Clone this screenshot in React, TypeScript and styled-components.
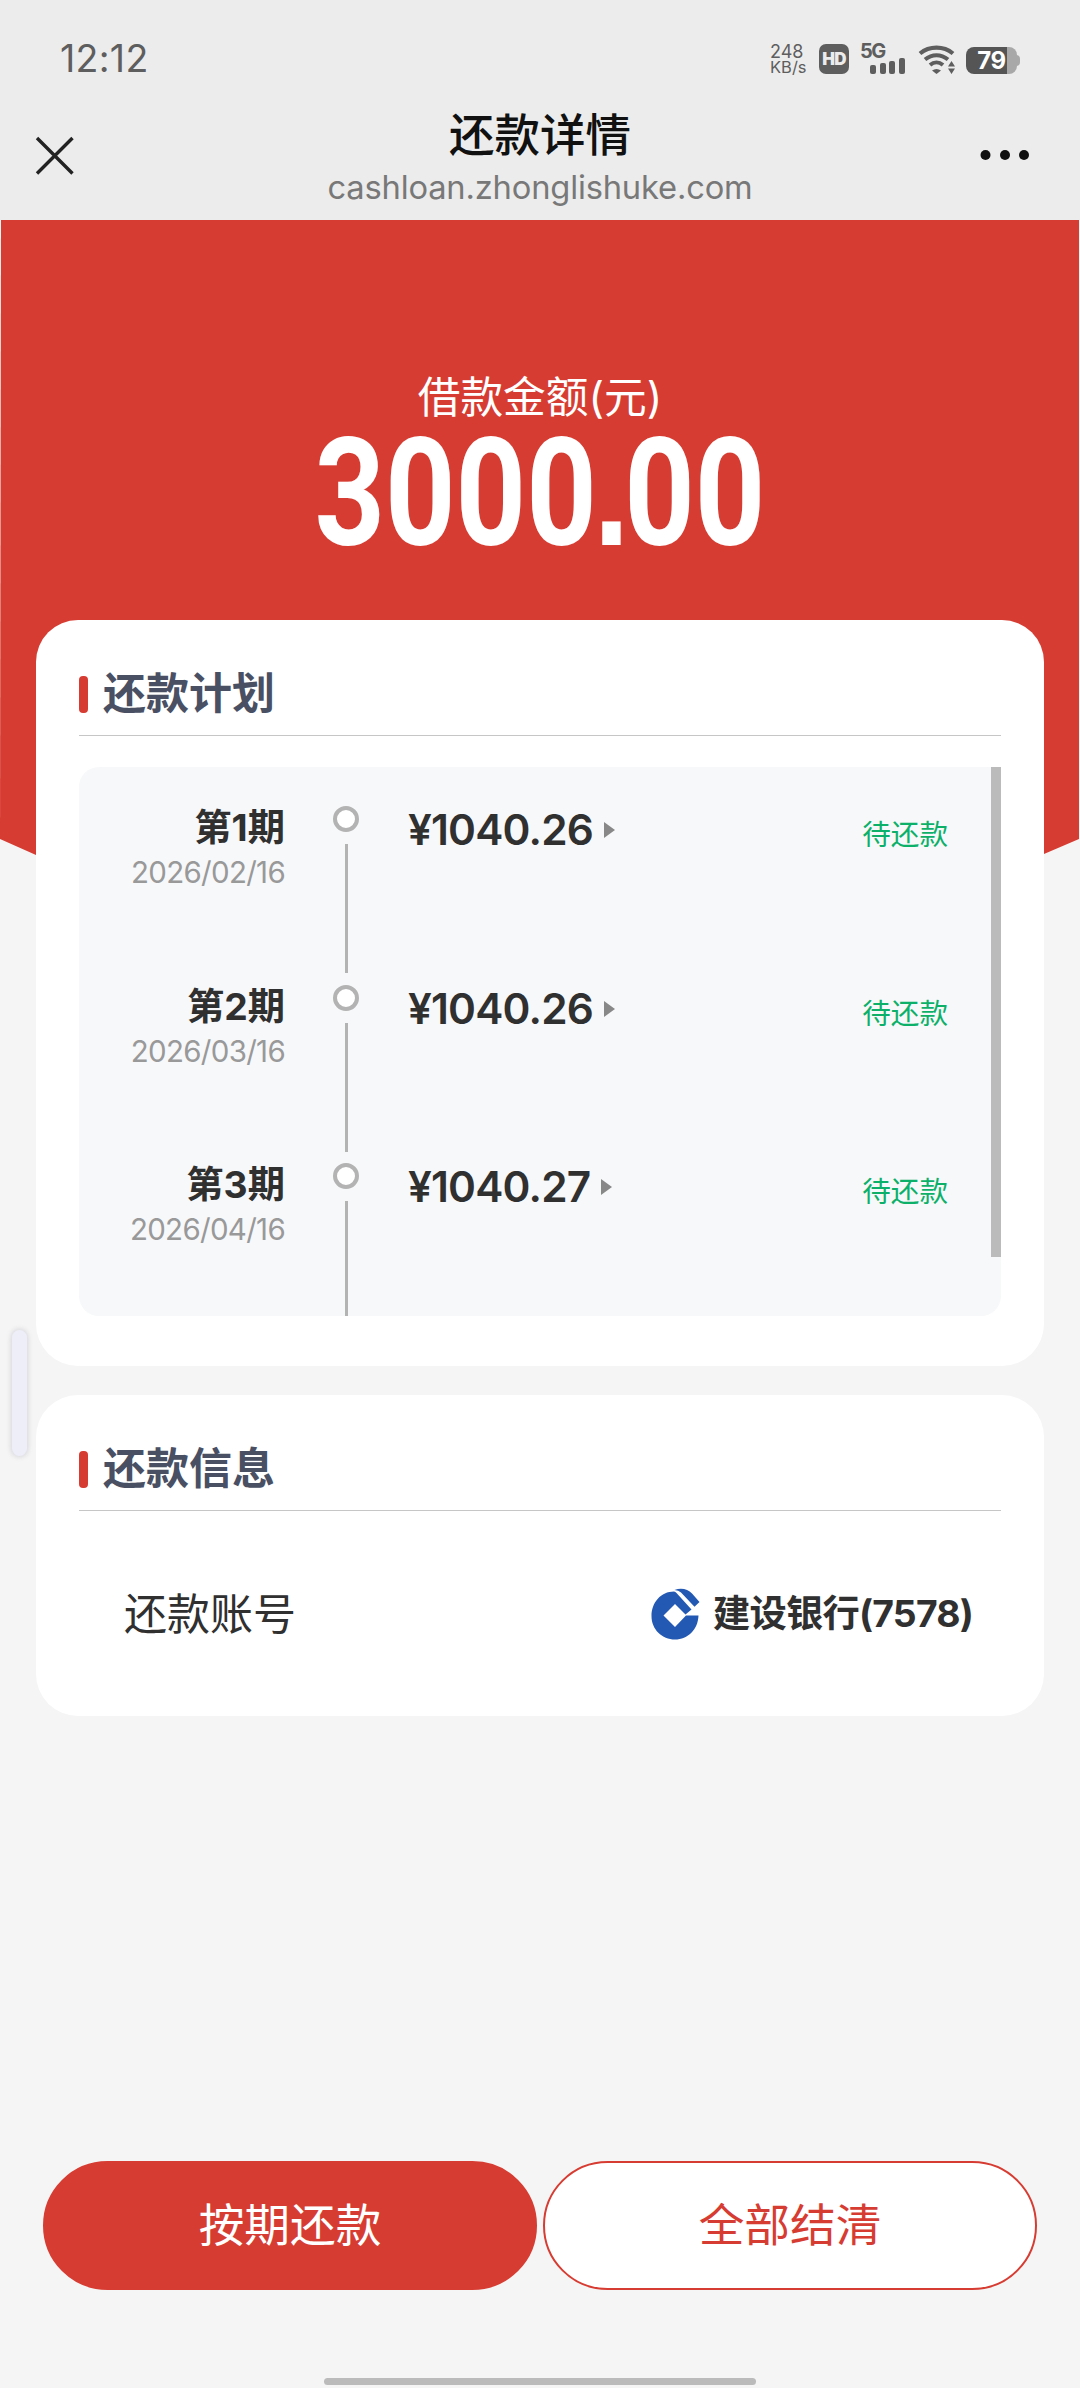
import React from "react";
import styled, { createGlobalStyle } from "styled-components";

const RED = "#d73c32";
const STATUS = "#5e5e5e";

const GlobalStyle = createGlobalStyle`
  *, *::before, *::after { box-sizing: border-box; }
  body {
    margin: 0;
    background: #f5f5f5;
    font-family: Inter, "Noto Sans CJK SC", sans-serif;
    color: #303030;
  }
  button { font-family: inherit; }
`;

const Page = styled.div`
  position: relative;
  width: 1080px;
  height: 2388px;
  display: flex;
  flex-direction: column;
  overflow: hidden;
  background: #f5f5f5;
  white-space: nowrap;
`;

const Header = styled.header`
  height: 220px;
  flex: none;
  display: flex;
  flex-direction: column;
  background: #ececec;
`;

const StatusBar = styled.div`
  height: 106px;
  padding: 0 63px 0 60px;
  display: flex;
  justify-content: space-between;
  align-items: flex-start;
  color: ${STATUS};
`;

const Clock = styled.div`
  margin-top: 36px;
  height: 46px;
  line-height: 46px;
  font-size: 37.5px;
  letter-spacing: 0.3px;
`;

const StatusIcons = styled.div`
  margin-top: 44px;
  height: 30px;
  display: flex;
  align-items: flex-start;
`;

const Speed = styled.div`
  width: 49px;
  display: flex;
  flex-direction: column;
  font-size: 18px;
  line-height: 15px;
`;

const SpeedUnit = styled.span`
  font-size: 16.5px;
  line-height: 17px;
  height: 15px;
`;

const HdBadge = styled.div`
  width: 30px;
  height: 30px;
  margin-right: 11px;
  border-radius: 7px;
  background: ${STATUS};
  color: #ececec;
  font-size: 17px;
  line-height: 30px;
  font-weight: 900;
  text-align: center;
  letter-spacing: -0.8px;
`;

const Signal = styled.div`
  width: 58px;
  height: 30px;
  display: flex;
  align-items: flex-end;
`;

const SignalLabel = styled.span`
  width: 10px;
  align-self: flex-start;
  font-size: 20px;
  line-height: 15px;
  font-weight: 700;
  letter-spacing: -1.5px;
`;

const Bars = styled.div`
  display: flex;
  gap: 3.7px;
  align-items: flex-end;
`;

const Bar = styled.i<{ $h: number }>`
  width: 6px;
  height: ${(p) => p.$h}px;
  border-radius: 2px;
  background: ${STATUS};
`;

const WifiIcon = styled.svg`
  width: 38px;
  height: 30px;
  margin-right: 10px;
`;

const Battery = styled.div`
  position: relative;
  margin-top: 3px;
  width: 51px;
  height: 27px;
  border-radius: 8px;
  background: linear-gradient(90deg, #555 41px, #a8a8a8 41px);
  color: #fff;
  font-size: 24px;
  line-height: 28px;
  font-weight: 700;
  text-align: center;
  letter-spacing: -0.5px;
  &::after {
    content: "";
    position: absolute;
    right: -3px;
    top: 8px;
    width: 4px;
    height: 11px;
    border-radius: 0 4px 4px 0;
    background: #a8a8a8;
  }
`;

const TitleBar = styled.div`
  height: 114px;
  padding: 0 50px 0 35px;
  display: grid;
  grid-template-columns: 120px 1fr 105px;
`;

const CloseIcon = styled.svg`
  width: 40px;
  height: 40px;
  margin-top: 29.5px;
`;

const MoreIcon = styled.svg`
  width: 50px;
  height: 12px;
  margin-top: 43px;
  justify-self: end;
`;

const TitleGroup = styled.div`
  display: flex;
  flex-direction: column;
  align-items: center;
`;

const PageTitle = styled.h1`
  margin: 3px 0 0;
  height: 54px;
  line-height: 54px;
  font-size: 45.5px;
  font-weight: 500;
  color: #111;
`;

const PageUrl = styled.div`
  margin-top: 4px;
  height: 40px;
  line-height: 40px;
  font-size: 32.7px;
  letter-spacing: -0.18px;
  color: #787878;
`;

const Hero = styled.section`
  flex: none;
  height: 700px;
  padding-top: 150px;
  display: flex;
  flex-direction: column;
  align-items: center;
  color: #fff;
  background: ${RED};
  clip-path: polygon(1px 0, 1079px 0, 1079px 619px, 1044px 634px, 880px 700px, 200px 700px, 36px 635px, 0 619px);
`;

const HeroLabel = styled.div`
  height: 56px;
  line-height: 56px;
  font-size: 42.7px;
`;

const HeroAmount = styled.div`
  margin-top: 9px;
  height: 118px;
  line-height: 118px;
  font-family: Roboto, sans-serif;
  font-size: 150px;
  font-weight: 700;
  transform: scaleX(0.82);
`;

const DecimalPoint = styled.span`
  margin-left: -4px;
  font-family: "Liberation Sans", sans-serif;
  font-size: 158px;
  line-height: 0;
  letter-spacing: -6.5px;
`;

const Cards = styled.main`
  position: relative;
  margin-top: -300px;
  padding: 0 36px;
  display: flex;
  flex-direction: column;
  gap: 29px;
`;

const Card = styled.section<{ $h: number }>`
  height: ${(p) => p.$h}px;
  padding: 0 43px;
  border-radius: 42px;
  background: #fff;
`;

const CardHead = styled.div`
  height: 116px;
  padding-top: 34px;
  display: flex;
  align-items: center;
  gap: 15px;
  border-bottom: 1px solid #c6c6c6;
  &::before {
    content: "";
    width: 9px;
    height: 37px;
    border-radius: 4px;
    background: ${RED};
  }
`;

const CardTitle = styled.h2`
  margin: 0;
  padding-bottom: 4px;
  font-size: 43px;
  line-height: 56px;
  font-weight: 700;
  color: #4a5064;
`;

const PlanPanel = styled.div`
  position: relative;
  margin-top: 31px;
  height: 549px;
  padding-top: 39px;
  overflow: hidden;
  border-radius: 20px 0 20px 20px;
  background: #f7f8fa;
`;

const ScrollThumb = styled.div`
  position: absolute;
  top: 0;
  right: 0;
  width: 10px;
  height: 490px;
  background: #bbb;
`;

const PlanRow = styled.div`
  height: 178.5px;
  padding-right: 53px;
  display: grid;
  grid-template-columns: 206px 48px 75px 1fr auto;
`;

const Term = styled.div`
  display: flex;
  flex-direction: column;
  align-items: flex-end;
`;

const TermName = styled.div`
  margin-top: 2px;
  height: 40px;
  line-height: 40px;
  font-size: 37.3px;
  font-weight: 700;
`;

const TermDate = styled.div`
  margin-top: 6px;
  height: 36px;
  line-height: 36px;
  font-size: 29.5px;
  letter-spacing: -0.7px;
  color: #999;
`;

const Track = styled.div`
  grid-column: 3;
  width: 26px;
  display: flex;
  flex-direction: column;
  align-items: center;
`;

const Node = styled.div`
  width: 26px;
  height: 26px;
  border: 4.5px solid #b3b3b3;
  border-radius: 50%;
  background: #fff;
`;

const Line = styled.div`
  margin-top: 12px;
  width: 3px;
  height: 129px;
  background: #b3b3b3;
`;

const Amount = styled.div`
  margin-top: -1px;
  height: 50px;
  display: flex;
  align-items: center;
  gap: 11px;
  font-size: 42.3px;
  line-height: 50px;
  font-weight: 600;
  letter-spacing: -0.8px;
`;

const Arrow = styled.i`
  border-left: 11px solid #888;
  border-top: 8.5px solid transparent;
  border-bottom: 8.5px solid transparent;
`;

const State = styled.div`
  margin-top: 8px;
  height: 42px;
  line-height: 42px;
  font-size: 28.6px;
  color: #0cb069;
`;

const AccountRow = styled.div`
  margin-top: 66px;
  height: 68px;
  padding: 0 28px 0 45px;
  display: flex;
  align-items: center;
  justify-content: space-between;
  font-size: 43px;
`;

const Bank = styled.div`
  display: flex;
  align-items: center;
  gap: 13px;
  font-size: 37.3px;
  font-weight: 700;
  letter-spacing: -0.8px;
`;

const BankLogo = styled.svg`
  width: 49px;
  height: 52px;
  margin-top: 6px;
`;

const SideHandle = styled.div`
  position: absolute;
  left: 12px;
  top: 1330px;
  width: 15px;
  height: 126px;
  border-radius: 8px;
  background: #eeeef8;
  box-shadow: 0 0 5px 1px rgba(90, 90, 120, 0.2);
`;

const Actions = styled.footer`
  margin-top: auto;
  padding: 0 43px 88px;
  display: grid;
  grid-template-columns: 1fr 1fr;
  gap: 6px;
`;

const ActionButton = styled.button<{ $solid?: boolean }>`
  height: 129px;
  padding: 0 0 7px;
  border: 2px solid ${RED};
  border-radius: 65px;
  background: ${(p) => (p.$solid ? RED : "#fff")};
  color: ${(p) => (p.$solid ? "#fff" : RED)};
  font-size: 45.7px;
`;

const HomeBar = styled.div`
  flex: none;
  width: 432px;
  height: 7px;
  margin: 0 auto 3px;
  border-radius: 4px;
  background: #bbb;
`;

const plan = [
  { term: "第1期", date: "2026/02/16", amount: "¥1040.26" },
  { term: "第2期", date: "2026/03/16", amount: "¥1040.26" },
  { term: "第3期", date: "2026/04/16", amount: "¥1040.27" },
];

export default function App() {
  return (
    <Page>
      <GlobalStyle />
      <Header>
        <StatusBar>
          <Clock>12:12</Clock>
          <StatusIcons>
            <Speed>
              248
              <SpeedUnit>KB/s</SpeedUnit>
            </Speed>
            <HdBadge>HD</HdBadge>
            <Signal>
              <SignalLabel>5G</SignalLabel>
              <Bars>
                {[9, 11, 13, 16].map((h) => (
                  <Bar key={h} $h={h} />
                ))}
              </Bars>
            </Signal>
            <WifiIcon viewBox="0 0 38 30" fill="none" stroke={STATUS}>
              <path d="M2 9.500C11.500 1.700 25.500 1.700 35 9.500" strokeWidth="4.200" />
              <path d="M7 15.500C14 9.800 23 9.800 30 15.500" strokeWidth="4" />
              <path d="M12 21C16 17.600 21 17.600 25 21" strokeWidth="4" />
              <path d="M14 26.500Q18.500 23.500 23 26.500L18.500 30Z" fill={STATUS} stroke="none" />
              <path d="M30 22.500L33.500 17L37 22.500ZM30 24.500L33.500 30L37 24.500Z" fill={STATUS} stroke="none" />
            </WifiIcon>
            <Battery>79</Battery>
          </StatusIcons>
        </StatusBar>
        <TitleBar>
          <CloseIcon viewBox="0 0 40 40" stroke="#222" strokeWidth="3.400">
            <path d="M2 2L37.500 37.500M37.500 2L2 37.500" />
          </CloseIcon>
          <TitleGroup>
            <PageTitle>还款详情</PageTitle>
            <PageUrl>cashloan.zhonglishuke.com</PageUrl>
          </TitleGroup>
          <MoreIcon viewBox="0 0 50 12" fill="#111">
            <circle cx="5.500" cy="6" r="5" />
            <circle cx="25" cy="6" r="5" />
            <circle cx="44" cy="6" r="5" />
          </MoreIcon>
        </TitleBar>
      </Header>

      <Hero>
        <HeroLabel>借款金额(元)</HeroLabel>
        <HeroAmount>
          3000<DecimalPoint>.</DecimalPoint>00
        </HeroAmount>
      </Hero>

      <Cards>
        <Card $h={746}>
          <CardHead>
            <CardTitle>还款计划</CardTitle>
          </CardHead>
          <PlanPanel>
            {plan.map((item) => (
              <PlanRow key={item.term}>
                <Term>
                  <TermName>{item.term}</TermName>
                  <TermDate>{item.date}</TermDate>
                </Term>
                <Track>
                  <Node />
                  <Line />
                </Track>
                <Amount>
                  {item.amount}
                  <Arrow />
                </Amount>
                <State>待还款</State>
              </PlanRow>
            ))}
            <ScrollThumb />
          </PlanPanel>
        </Card>

        <Card $h={321}>
          <CardHead>
            <CardTitle>还款信息</CardTitle>
          </CardHead>
          <AccountRow>
            <span>还款账号</span>
            <Bank>
              <BankLogo viewBox="0 0 49 52">
                <path
                  d="M23 3.500C10 3.500 .5 14.500 .5 28S11 51.500 24 51.500C37 51.500 47 41.500 47.500 27.500H35L24 39L12.500 27.500L24 16L34.500 26.500L40.500 21.500L25.500 5Q24.500 3.800 23 3.500Z"
                  fill="#2459b3"
                />
                <path d="M23.500 2C30 -.5 37 1 41 5.500L48.500 14L43.500 18.800L30 4.500Q27.500 2.200 23.500 2Z" fill="#2459b3" />
              </BankLogo>
              <span>建设银行(7578)</span>
            </Bank>
          </AccountRow>
        </Card>
      </Cards>

      <SideHandle />

      <Actions>
        <ActionButton $solid>按期还款</ActionButton>
        <ActionButton>全部结清</ActionButton>
      </Actions>
      <HomeBar />
    </Page>
  );
}
